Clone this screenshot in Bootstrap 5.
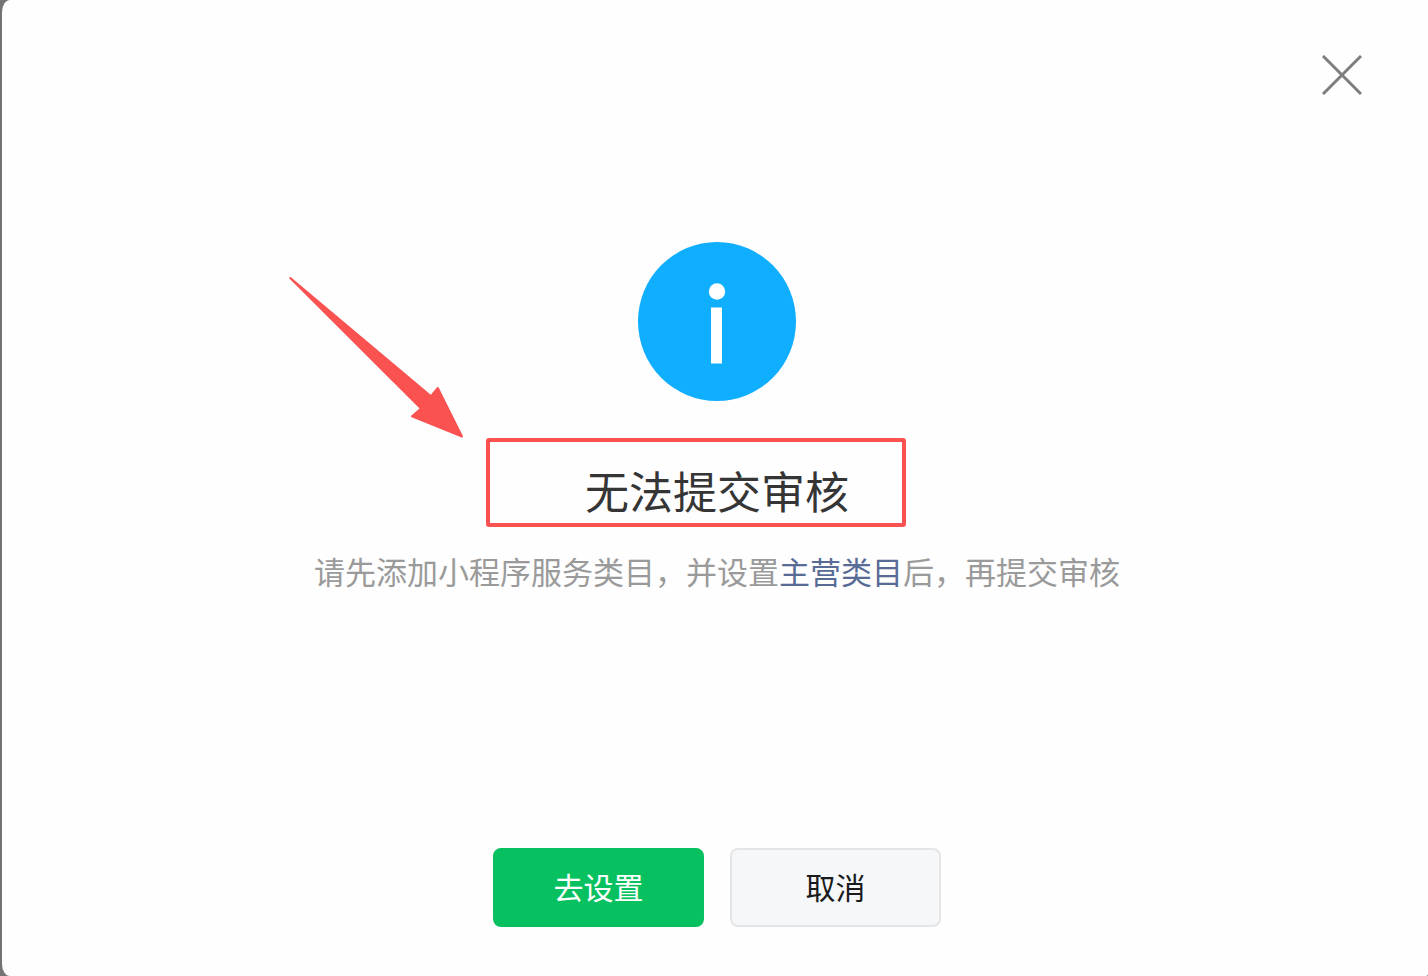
<!DOCTYPE html>
<html lang="zh-CN">
<head>
<meta charset="utf-8">
<meta name="viewport" content="width=device-width, initial-scale=1">
<title>无法提交审核</title>
<link href="https://cdn.jsdelivr.net/npm/bootstrap@5.3.0/dist/css/bootstrap.min.css" rel="stylesheet">
<style>
  body { background: #737373; font-family: "Noto Sans CJK SC", sans-serif; padding-left: 2px; }
  .dialog-panel { background: #fefefe; border-radius: 8px 0 2px 8px / 12px 0 2px 12px; padding-left: 4px; }
  .dialog-top { padding: 55px 66px 0 0; }
  .close-btn { width: 40px; height: 40px; line-height: 0; }
  .dialog-main { padding-top: 147px; }
  .info-icon { width: 158px; height: 159px; }
  .title-wrap { margin-top: 59px; }
  .dialog-title { margin: 0; font-size: 44px; line-height: 60px; font-weight: 400; color: #353535; }
  .dialog-text { margin: 28px 0 0; font-size: 31px; line-height: 46px; color: #9a9a9a; }
  .dialog-text a { color: #576b95; }
  .mark-frame { left: -99px; top: -22px; width: 420px; height: 89px; border: 4px solid #fa5151; border-radius: 3px; }
  .mark-arrow { left: -297px; top: -184px; width: 177px; height: 164px; }
  .dialog-actions { gap: 26px; padding-bottom: 49px; }
  .dialog-actions .btn { width: 211px; height: 79px; padding: 0 0 4px; border-width: 2px; border-radius: 8px; font-size: 30px; line-height: 46px; }
  .btn-go { --bs-btn-bg: #07c160; --bs-btn-color: #fff; --bs-btn-border-color: #07c160; --bs-btn-hover-bg: #06ad56; --bs-btn-hover-color: #fff; }
  .btn-cancel { --bs-btn-bg: #f6f7f9; --bs-btn-color: #1a1b1c; --bs-btn-border-color: #e4e5e7; --bs-btn-hover-bg: #e9eaec; }
</style>
</head>
<body>
<div class="dialog-panel d-flex flex-column min-vh-100 overflow-hidden" role="dialog" aria-labelledby="dialog-title">
  <header class="dialog-top d-flex justify-content-end">
    <button type="button" class="close-btn border-0 bg-transparent p-0" aria-label="关闭">
      <svg width="40" height="40" viewBox="0 0 40 40" fill="none" stroke="#7e7e7e" stroke-width="3" aria-hidden="true"><path d="M1 1 39 39M39 1 1 39"/></svg>
    </button>
  </header>
  <main class="dialog-main d-flex flex-column align-items-center text-center">
    <svg class="info-icon" viewBox="0 0 158 159" aria-hidden="true">
      <ellipse cx="79" cy="79.5" rx="79" ry="79.5" fill="#10aeff"/>
      <circle cx="79" cy="49.5" r="8.2" fill="#fff"/>
      <path d="M73 65.5h11v56H73z" fill="#fff"/>
    </svg>
    <div class="title-wrap position-relative">
      <h1 class="dialog-title" id="dialog-title">无法提交审核</h1>
      <div class="mark-frame position-absolute"></div>
      <svg class="mark-arrow position-absolute" viewBox="0 0 177 164" aria-hidden="true">
        <path d="M2.300 2 143 120.200 149.800 112 174 160.500 124 140.300 133 132.500Z" fill="#fa5151" stroke="#fa5151" stroke-width="2" stroke-linejoin="round"/>
      </svg>
    </div>
    <p class="dialog-text">请先添加小程序服务类目，并设置<a href="#" class="text-decoration-none">主营类目</a>后，再提交审核</p>
  </main>
  <footer class="dialog-actions d-flex justify-content-center mt-auto">
    <button type="button" class="btn btn-go">去设置</button>
    <button type="button" class="btn btn-cancel">取消</button>
  </footer>
</div>
<script src="https://cdn.jsdelivr.net/npm/bootstrap@5.3.0/dist/js/bootstrap.bundle.min.js"></script>
</body>
</html>
